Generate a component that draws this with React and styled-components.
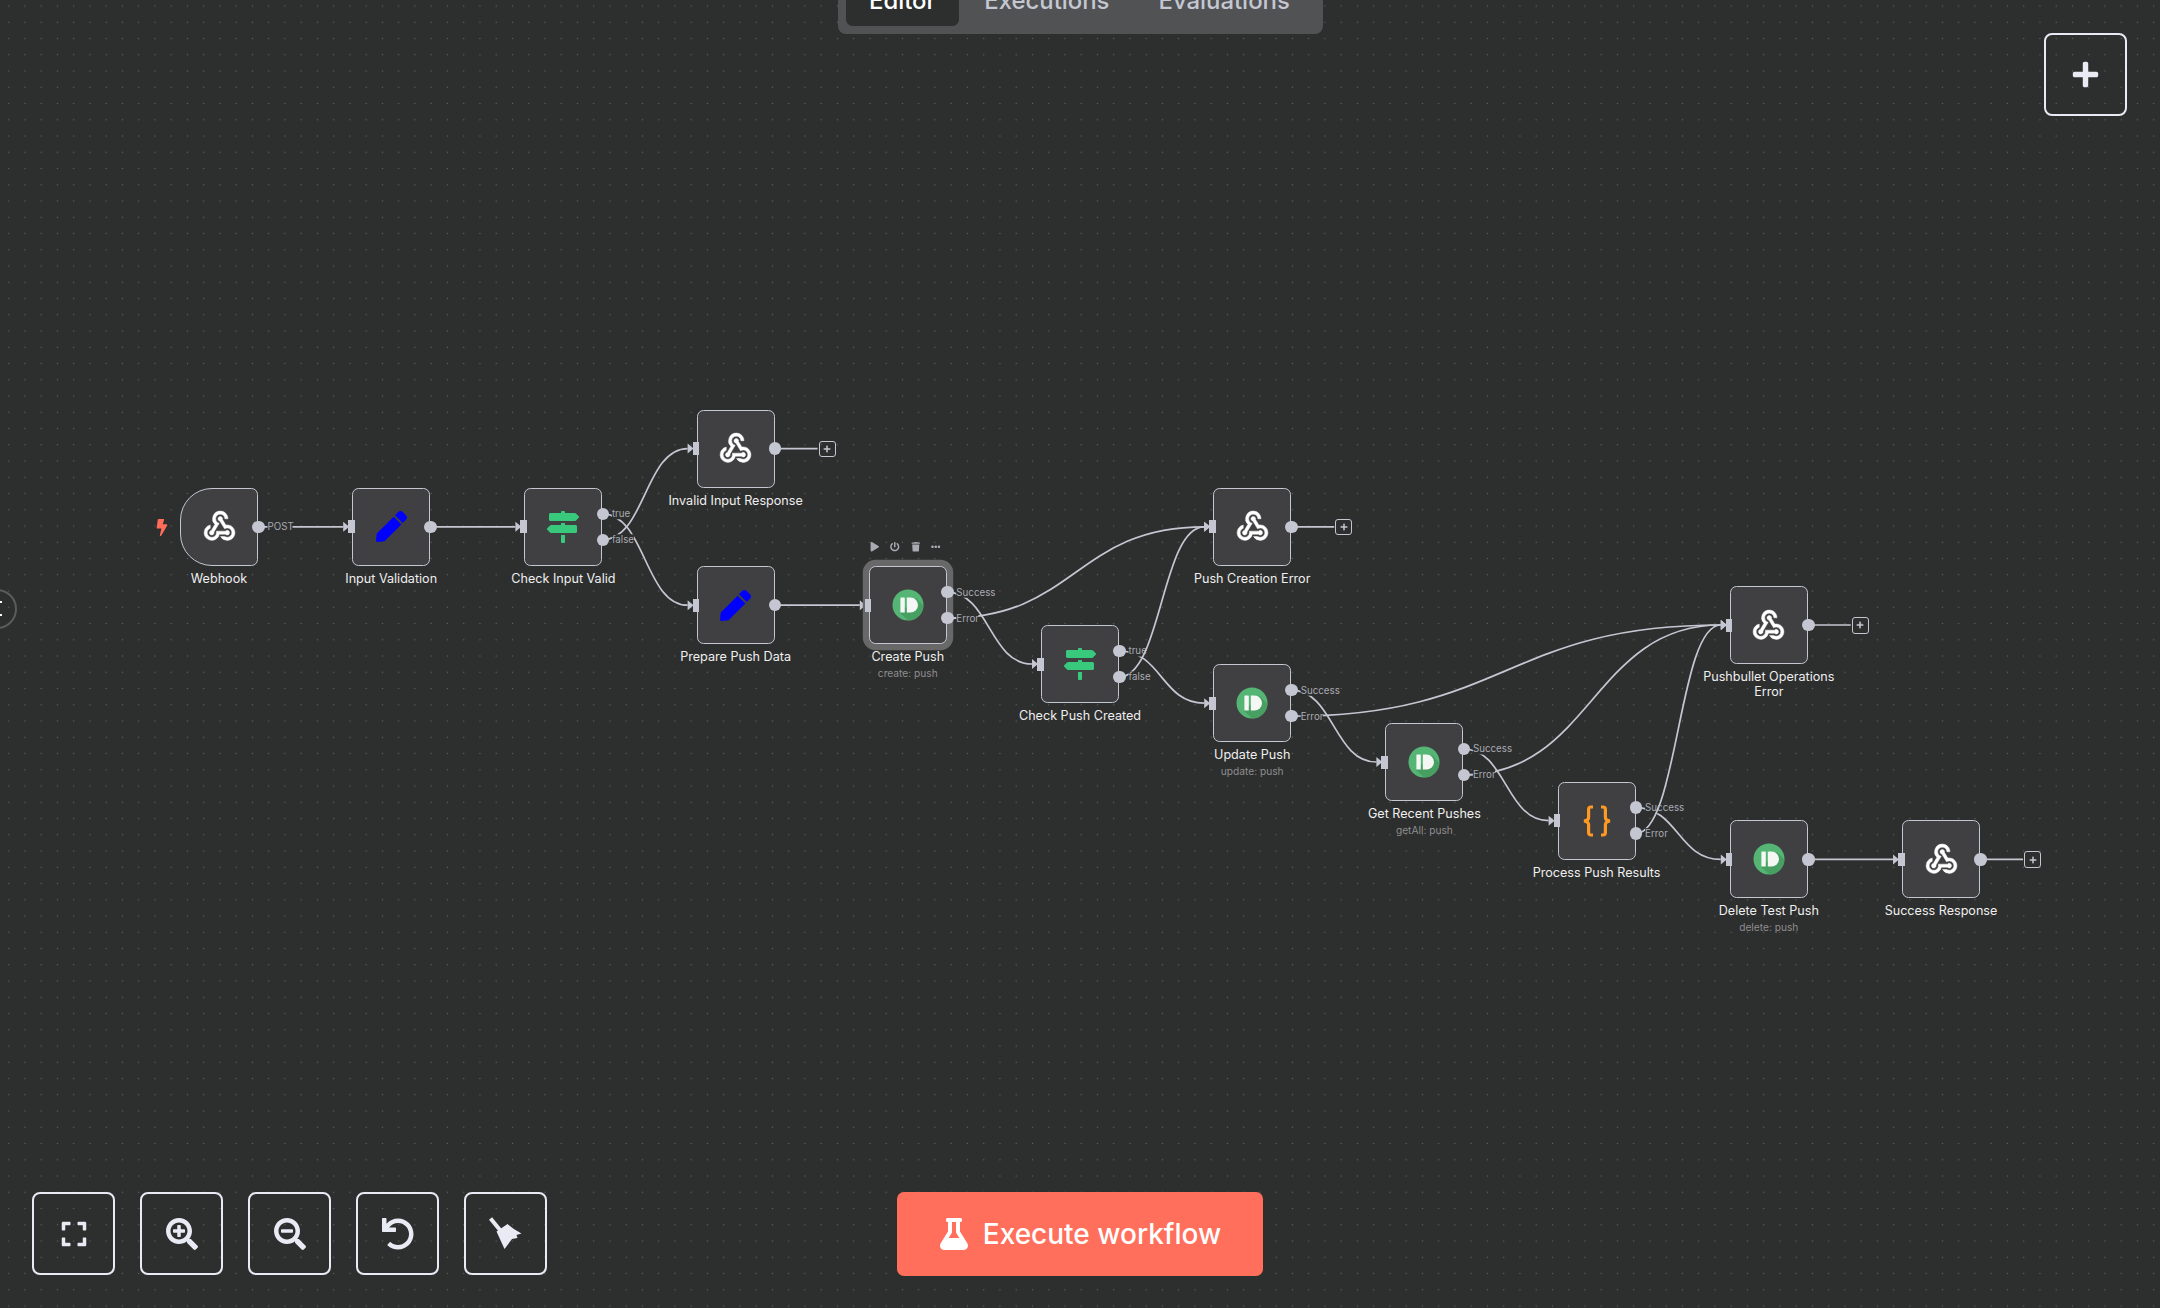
import React from 'react';
import styled, { createGlobalStyle } from 'styled-components';
import {
  FaBolt, FaEllipsisH, FaExpand, FaFlask, FaMapSigns, FaPen, FaPlay,
  FaPlus, FaPowerOff, FaSearchMinus, FaSearchPlus, FaTrash, FaUndo,
} from 'react-icons/fa';
import { MdWebhook } from 'react-icons/md';

const NODE = 78;
const LINE = '#c4c7d1';
const CANVAS = '#2d2e2e';

const GlobalStyle = createGlobalStyle`
  html, body {
    margin: 0;
    padding: 0;
    background: ${CANVAS};
    font-family: Inter, "Liberation Sans", sans-serif;
  }
`;

const Canvas = styled.div`
  position: relative;
  width: 2160px;
  height: 1308px;
  overflow: hidden;
  background-color: ${CANVAS};
  background-image: radial-gradient(circle, #606060 0.7px, transparent 1px);
  background-size: 16.25px 16.25px;
  background-position: 0.6px -2.1px;
`;

const EdgeLayer = styled.svg`
  position: absolute;
  inset: 0;
  width: 100%;
  height: 100%;
`;

const NodeItem = styled.div`
  position: absolute;
  left: ${p => p.$x}px;
  top: ${p => p.$y}px;
  width: ${NODE}px;
  display: flex;
  flex-direction: column;
  align-items: center;
`;

const NodeCard = styled.div`
  position: relative;
  box-sizing: border-box;
  width: ${NODE}px;
  height: ${NODE}px;
  flex: none;
  display: flex;
  align-items: center;
  justify-content: center;
  background: #404042;
  border: 1.7px solid ${LINE};
  border-radius: ${p => (p.$trigger ? '32px 6.5px 6.5px 32px' : '6.5px')};
  box-shadow: ${p => (p.$selected ? '0 0 0 6.2px #686868' : 'none')};
`;

const InputPort = styled.span`
  position: absolute;
  left: -5px;
  top: 50%;
  width: 6.5px;
  height: 13px;
  margin-top: -6.5px;
  background: ${LINE};
`;

const OutputDot = styled.span`
  position: absolute;
  right: -7.9px;
  top: calc(50% + ${p => p.$offset}px);
  width: 12.6px;
  height: 12.6px;
  margin-top: -6.3px;
  border-radius: 50%;
  background: ${LINE};
`;

const TriggerBolt = styled(FaBolt)`
  position: absolute;
  left: -25px;
  top: 30px;
  width: 12px;
  height: 17px;
  color: #ff6d5a;
`;

const Caption = styled.div`
  width: 150px;
  margin-top: 5px;
  text-align: center;
  color: #efefef;
  font-size: 12.6px;
  font-weight: 400;
  line-height: 15px;
`;

const Subtitle = styled.div`
  margin-top: 3px;
  color: #8d8d8f;
  font-size: 10.2px;
  font-weight: 400;
  line-height: 13px;
`;

const NodeToolbar = styled.div`
  position: absolute;
  left: 0.5px;
  bottom: calc(100% + 15.5px);
  display: flex;
  align-items: center;
  gap: 10.7px;
  color: #a9abb3;
  font-size: 9.5px;
`;

const PlusBox = styled.div`
  position: absolute;
  left: ${NODE + 43}px;
  top: 30px;
  box-sizing: border-box;
  width: 17px;
  height: 16.5px;
  display: flex;
  align-items: center;
  justify-content: center;
  border: 1.6px solid ${LINE};
  border-radius: 3px;
  color: ${LINE};
  font-size: 8px;
`;

const ViewTabs = styled.div`
  position: absolute;
  left: 837.5px;
  top: -34px;
  box-sizing: border-box;
  height: 68px;
  width: 485px;
  padding: 8px;
  display: flex;
  background: #515254;
  border-radius: 8px;
`;

const ViewTab = styled.div`
  height: 52px;
  display: flex;
  align-items: center;
  padding: 0 ${p => (p.$active ? '23.5px' : '0')};
  margin-right: ${p => p.$gap || 0}px;
  box-sizing: border-box;
  border-radius: 6.5px;
  background: ${p => (p.$active ? CANVAS : 'transparent')};
  color: ${p => (p.$active ? '#ffffff' : '#c4c7d1')};
  font-size: 23.9px;
  font-weight: 500;
`;

const ControlBar = styled.div`
  position: absolute;
  left: 32.3px;
  bottom: 33px;
  display: flex;
  gap: 25px;
`;

const IconButton = styled.button`
  box-sizing: border-box;
  width: 83px;
  height: 83px;
  padding: 0;
  display: flex;
  align-items: center;
  justify-content: center;
  background: transparent;
  border: 2px solid #e8ebf3;
  border-radius: 8px;
  color: #e8ebf3;
  font-size: ${p => p.$size || 32}px;
`;

const AddButton = styled(IconButton)`
  position: absolute;
  right: 32.7px;
  top: 32.5px;
`;

const ExecuteButton = styled.button`
  position: absolute;
  left: 896.5px;
  bottom: 32px;
  box-sizing: border-box;
  width: 366px;
  height: 84px;
  display: flex;
  align-items: center;
  justify-content: center;
  gap: 13px;
  background: #ff6f5c;
  border: none;
  border-radius: 7px;
  color: #ffffff;
  font-family: inherit;
  font-size: 28px;
  font-weight: 500;
  svg {
    font-size: 32px;
  }
`;

const SideHandle = styled.div`
  position: absolute;
  left: -23px;
  top: 589px;
  box-sizing: border-box;
  width: 40px;
  height: 40px;
  border: 2px solid #5a5b5c;
  border-radius: 50%;
`;

const SideChevron = styled.svg`
  position: absolute;
  left: 0;
  top: 601px;
  width: 2px;
  height: 16px;
`;

const BroomIcon = () => (
  <svg width="33" height="33" viewBox="0 0 33 33" fill="currentColor">
    <path d="M1.5 1.5 L11 13" stroke="currentColor" strokeWidth="4" />
    <path d="M7.5 14.5 L18.5 7 Q24 12 32.5 16.5 L27.5 18 L28.5 21 L23 22 L15.5 32 Z" />
  </svg>
);

const WebhookGlyph = styled(MdWebhook)`
  color: #ffffff;
  path {
    stroke: #ffffff;
    stroke-width: 0.3;
  }
  path[fill='none'] {
    stroke: none;
  }
`;

const WebhookIcon = () => <WebhookGlyph size={37} />;

const EditIcon = () => <FaPen size={31} color="#0000ff" />;

const IfIcon = () => <FaMapSigns size={32} color="#38c97c" />;

const PushbulletIcon = () => (
  <svg width="32" height="32" viewBox="0 0 32 32">
    <defs>
      <clipPath id="pb-circle">
        <circle cx="16" cy="16" r="15.5" />
      </clipPath>
    </defs>
    <circle cx="16" cy="16" r="15.5" fill="#55b574" />
    <path d="M8 24 L24 9 L40 26 L26 40 Z" fill="#479f62" clipPath="url(#pb-circle)" />
    <rect x="8.4" y="8.5" width="4.4" height="15" rx="0.6" fill="#f4f7f4" />
    <path d="M14.8 8.5 h3.7 a7.5 7.5 0 0 1 0 15 h-3.7 z" fill="#f4f7f4" />
  </svg>
);

const CodeIcon = () => (
  <svg width="32" height="32" viewBox="0 0 32 32" fill="none" stroke="#ff9922" strokeWidth="3.2">
    <path d="M12 2 H10 Q7.6 2 7.6 4.5 V12.5 Q7.6 15.4 3 16 Q7.6 16.6 7.6 19.5 V27.5 Q7.6 30 10 30 H12" />
    <path d="M20 2 H22 Q24.4 2 24.4 4.5 V12.5 Q24.4 15.4 29 16 Q24.4 16.6 24.4 19.5 V27.5 Q24.4 30 22 30 H20" />
  </svg>
);

const ICONS = {
  webhook: WebhookIcon,
  edit: EditIcon,
  if: IfIcon,
  pushbullet: PushbulletIcon,
  code: CodeIcon,
};

const col = i => 180 + i * 172.2;

const nodes = {
  webhook: { x: col(0), y: 487.8, icon: 'webhook', name: 'Webhook', trigger: true },
  validate: { x: col(1), y: 487.8, icon: 'edit', name: 'Input Validation' },
  check: { x: col(2), y: 487.8, icon: 'if', name: 'Check Input Valid', outs: [-13, 13] },
  invalid: { x: col(3), y: 409.6, icon: 'webhook', name: 'Invalid Input Response', plus: true },
  prepare: { x: col(3), y: 566.2, icon: 'edit', name: 'Prepare Push Data' },
  create: { x: col(4), y: 566.2, icon: 'pushbullet', name: 'Create Push', sub: 'create: push', outs: [-13, 13], selected: true },
  checkPush: { x: col(5), y: 625, icon: 'if', name: 'Check Push Created', outs: [-13, 13] },
  pushError: { x: col(6), y: 487.8, icon: 'webhook', name: 'Push Creation Error', plus: true },
  update: { x: col(6), y: 664.2, icon: 'pushbullet', name: 'Update Push', sub: 'update: push', outs: [-13, 13] },
  recent: { x: col(7), y: 723, icon: 'pushbullet', name: 'Get Recent Pushes', sub: 'getAll: push', outs: [-13, 13] },
  process: { x: col(8), y: 781.7, icon: 'code', name: 'Process Push Results', outs: [-13, 13] },
  opsError: { x: col(9), y: 586, icon: 'webhook', name: 'Pushbullet Operations Error', plus: true },
  remove: { x: col(9), y: 820.4, icon: 'pushbullet', name: 'Delete Test Push', sub: 'delete: push' },
  success: { x: col(10), y: 820.4, icon: 'webhook', name: 'Success Response', plus: true },
};

// from, output index, to, label, label width
const edges = [
  ['webhook', 0, 'validate', 'POST', 24],
  ['validate', 0, 'check'],
  ['check', 0, 'prepare', 'true', 17],
  ['check', 1, 'invalid', 'false', 21],
  ['prepare', 0, 'create'],
  ['create', 0, 'checkPush', 'Success', 37],
  ['create', 1, 'pushError', 'Error', 21],
  ['checkPush', 0, 'update', 'true', 17],
  ['checkPush', 1, 'pushError', 'false', 21],
  ['update', 0, 'recent', 'Success', 37],
  ['update', 1, 'opsError', 'Error', 21],
  ['recent', 0, 'process', 'Success', 37],
  ['recent', 1, 'opsError', 'Error', 21],
  ['process', 0, 'remove', 'Success', 37],
  ['process', 1, 'opsError', 'Error', 21],
  ['remove', 0, 'success'],
];

const Edge = ({ from, out, to, label, width }) => {
  const a = nodes[from];
  const b = nodes[to];
  const sx = a.x + NODE;
  const sy = a.y + NODE / 2 + (a.outs ? a.outs[out] : 0);
  const tx = b.x - 9;
  const ty = b.y + NODE / 2;
  const mid = (sx + tx) / 2;
  const lx = sx + 9.5;
  return (
    <g>
      <path d={`M${sx} ${sy} C${mid} ${sy} ${mid} ${ty} ${tx} ${ty}`} fill="none" stroke={LINE} strokeWidth="1.7" />
      <path d={`M${tx} ${ty - 5} L${tx + 6} ${ty} L${tx} ${ty + 5} Z`} fill={LINE} />
      {label && <rect x={lx} y={sy - 5.5} width={width + 1} height={11} fill={CANVAS} />}
      {label && (
        <text x={lx} y={sy + 3.4} fill="#a9abb3" fontSize="9.75" fontFamily="Inter, sans-serif">
          {label}
        </text>
      )}
    </g>
  );
};

const PlusEdge = ({ node }) => {
  const y = node.y + NODE / 2;
  return <path d={`M${node.x + NODE} ${y} H${node.x + NODE + 43}`} stroke={LINE} strokeWidth="1.7" />;
};

const WorkflowNode = ({ node }) => {
  const Icon = ICONS[node.icon];
  const outs = node.outs || [0];
  return (
    <NodeItem $x={node.x} $y={node.y}>
      <NodeCard $trigger={node.trigger} $selected={node.selected}>
        {node.trigger ? <TriggerBolt /> : <InputPort />}
        <Icon />
        {outs.map(offset => <OutputDot key={offset} $offset={offset} />)}
        {node.plus && <PlusBox><FaPlus /></PlusBox>}
        {node.selected && (
          <NodeToolbar>
            <FaPlay />
            <FaPowerOff />
            <FaTrash />
            <FaEllipsisH />
          </NodeToolbar>
        )}
      </NodeCard>
      <Caption>
        {node.name}
        {node.sub && <Subtitle>{node.sub}</Subtitle>}
      </Caption>
    </NodeItem>
  );
};

export default function App() {
  return (
    <Canvas>
      <GlobalStyle />
      <ViewTabs>
        <ViewTab $active $gap={25}>Editor</ViewTab>
        <ViewTab $gap={49}>Executions</ViewTab>
        <ViewTab>Evaluations</ViewTab>
      </ViewTabs>
      <EdgeLayer viewBox="0 0 2160 1308">
        {edges.map(([from, out, to, label, width]) => (
          <Edge key={`${from}-${out}`} from={from} out={out} to={to} label={label} width={width} />
        ))}
        {Object.values(nodes).filter(n => n.plus).map(n => <PlusEdge key={n.name} node={n} />)}
      </EdgeLayer>
      {Object.values(nodes).map(n => <WorkflowNode key={n.name} node={n} />)}
      <AddButton $size={29}><FaPlus /></AddButton>
      <SideHandle />
      <SideChevron viewBox="0 0 2 16">
        <path d="M0 1 L2 1 M0 14 L2 14" stroke="#ffffff" strokeWidth="2" />
      </SideChevron>
      <ControlBar>
        <IconButton $size={28}><FaExpand /></IconButton>
        <IconButton><FaSearchPlus /></IconButton>
        <IconButton><FaSearchMinus /></IconButton>
        <IconButton><FaUndo /></IconButton>
        <IconButton><BroomIcon /></IconButton>
      </ControlBar>
      <ExecuteButton><FaFlask />Execute workflow</ExecuteButton>
    </Canvas>
  );
}
